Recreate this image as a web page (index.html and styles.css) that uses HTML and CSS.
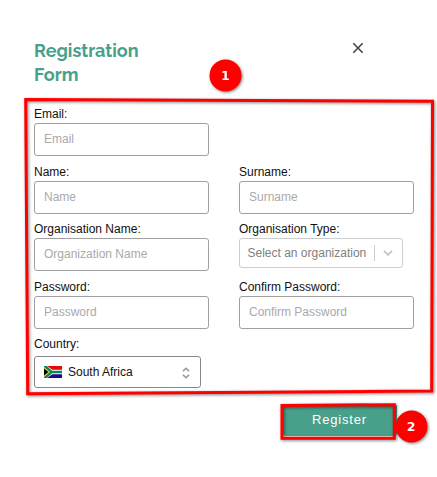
FILE: index.html
```html
<!DOCTYPE html>
<html lang="en">
<head>
<meta charset="utf-8">
<title>Registration Form</title>
<link rel="stylesheet" href="styles.css">
</head>
<body>
<main class="dialog">
  <header class="head">
    <h1 class="title">Registration Form</h1>
    <svg class="close" width="12" height="12" viewBox="0 0 12 12"><path d="M1.3 1.3L10.7 10.7M10.7 1.3L1.3 10.7" fill="none" stroke="#444" stroke-width="1.6"/></svg>
  </header>
  <form class="form">
    <div class="field"><label for="email">Email:</label><input id="email" class="control" placeholder="Email"></div>
    <div></div>
    <div class="field"><label for="name">Name:</label><input id="name" class="control" placeholder="Name"></div>
    <div class="field"><label for="surname">Surname:</label><input id="surname" class="control" placeholder="Surname"></div>
    <div class="field"><label for="org">Organisation Name:</label><input id="org" class="control" placeholder="Organization Name"></div>
    <div class="field"><label>Organisation Type:</label>
      <div class="select"><span class="select-text">Select an organization</span><span class="divider"></span>
        <svg width="10" height="6" viewBox="0 0 10 6"><path d="M1 .8L5 4.9L9 .8" fill="none" stroke="#c4c4c4" stroke-width="1.7"/></svg>
      </div>
    </div>
    <div class="field"><label for="pass">Password:</label><input id="pass" class="control" placeholder="Password"></div>
    <div class="field"><label for="confirm">Confirm Password:</label><input id="confirm" class="control" placeholder="Confirm Password"></div>
    <div class="field"><label>Country:</label>
      <div class="country">
        <svg width="18" height="12" viewBox="0 0 18 12">
          <path fill="#fff" d="M0 0H18V12H0z"/>
          <path fill="#e20a0a" d="M3 0H18V3.7H8.4z"/>
          <path fill="#1c0a8c" d="M3 12H18V8.3H8.4z"/>
          <path d="M0 -.8L7.6 6L0 12.8M7 6H18" fill="none" stroke="#088a52" stroke-width="2.5"/>
          <path fill="#f5b522" d="M0 1.2L5.8 6L0 10.8z"/>
          <path fill="#000" d="M0 2.4L4.3 6L0 9.6z"/>
        </svg>
        <span class="country-name">South Africa</span>
        <svg class="sorter" width="8" height="12" viewBox="0 0 8 12"><path d="M1 4.1L4 1.3L7 4.1M1 7.9L4 10.7L7 7.9" fill="none" stroke="#9696a5" stroke-width="1.5"/></svg>
      </div>
    </div>
  </form>
  <button class="register" type="button">Register</button>
</main>
<svg class="marks" width="437" height="477" viewBox="0 0 437 477">
  <g fill="none" stroke="#f00" stroke-width="3">
    <path d="M25.7 99.6L432.5 101.3L431.7 391L27.7 393.8z"/>
    <path d="M282 405.4L394.3 404.7L394.3 438.3L282 438.3z"/>
  </g>
  <g fill="#f00"><circle cx="225.5" cy="75.5" r="16"/><circle cx="411.5" cy="426.5" r="16"/></g>
  <g class="mark-number"><text x="225.3" y="80">1</text><text x="411.2" y="431">2</text></g>
</svg>
</body>
</html>
```
FILE: styles.css
```css
* { box-sizing: border-box; }
body {
  margin: 0;
  background: #fff;
  font: 12px "Liberation Sans", Arial, sans-serif;
  color: #111;
}
.dialog {
  width: 437px;
  height: 477px;
  padding: 39px 23px 0 34px;
}
.head {
  display: flex;
  justify-content: space-between;
  height: 67px;
  padding-right: 50px;
}
.title {
  width: 130px;
  margin: 0;
  font: 700 18px/24px Raleway, Lato, sans-serif;
  color: #48a08a;
}
.close { margin-top: 3px; }
.form {
  display: grid;
  grid-template-columns: 175px 175px;
  grid-template-rows: 58px 57px 58px 57px 58px;
  column-gap: 30px;
}
.field label {
  display: block;
  height: 17px;
  line-height: 16px;
}
.control {
  display: block;
  width: 175px;
  height: 33px;
  padding: 0 9px 1px;
  border: 1px solid #a0a0a0;
  border-radius: 3px;
  background: #fff;
  font: inherit;
}
.control::placeholder { color: #aaa; opacity: 1; }
.select {
  display: flex;
  align-items: center;
  width: 164px;
  height: 30px;
  padding: 0 9px 0 7.5px;
  border: 1px solid #ccc;
  border-radius: 3px;
  color: #808080;
}
.select-text { flex: 1; white-space: nowrap; }
.divider {
  width: 1px;
  height: 16px;
  margin-right: 8.5px;
  background: #ccc;
}
.country {
  display: flex;
  align-items: center;
  width: 167px;
  height: 32px;
  margin-top: 3px;
  padding: 0 10px 0 9px;
  border: 1px solid #888;
  border-radius: 3px;
}
.country-name { flex: 1; margin-left: 6px; }
.sorter { margin-top: 2px; }
.register {
  display: block;
  width: 114px;
  height: 32px;
  margin: 10px 0 0 249px;
  padding: 0 1px 1px 0;
  border: 0;
  border-radius: 3px;
  background: #48a08a;
  color: #fff;
  font: 13px/31px "Liberation Sans", Arial, sans-serif;
  letter-spacing: 0.8px;
}
.marks {
  position: absolute;
  top: 0;
  left: 0;
  pointer-events: none;
  filter: drop-shadow(1.5px 1.5px 1.5px rgba(0, 0, 0, 0.5));
}
.mark-number {
  fill: #fff;
  font: 700 12.5px "DejaVu Sans", sans-serif;
  text-anchor: middle;
}
```
